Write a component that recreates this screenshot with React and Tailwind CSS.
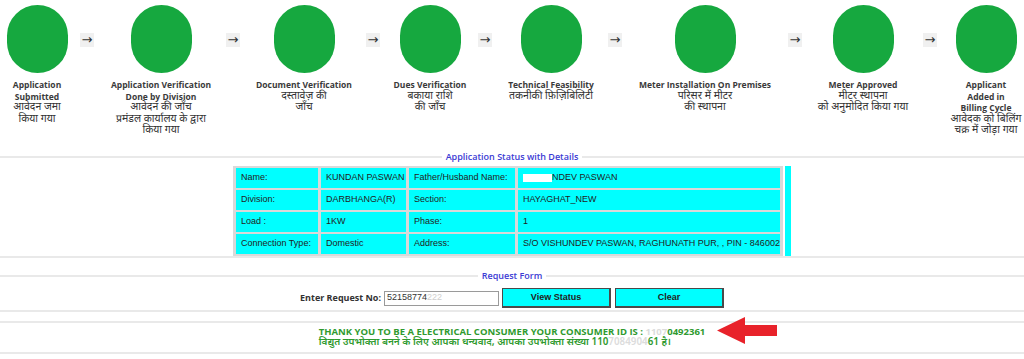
import React from 'react';

const HINDI = "font-['Noto_Sans_Devanagari','Lohit_Devanagari','Noto_Sans',sans-serif]";

const STEPS = [
    { width: 'w-[74px]', title: ['Application', 'Submitted'], hindi: ['आवेदन जमा', 'किया गया'] },
    { width: 'w-[122px]', title: ['Application Verification', 'Done by Division'], hindi: ['आवेदन की जाँच', 'प्रमंडल कार्यालय के द्वारा', 'किया गया'] },
    { width: 'w-[120px]', title: ['Document Verification'], hindi: ['दस्तावेज़ की', 'जाँच'] },
    { width: 'w-[96px]', title: ['Dues Verification'], hindi: ['बकाया राशि', 'की जाँच'] },
    { width: 'w-[118px]', title: ['Technical Feasibility'], hindi: ['तकनीकी फ़िज़िबिलिटी'] },
    { width: 'w-[170px]', title: ['Meter Installation On Premises'], hindi: ['परिसर में मीटर', 'की स्थापना'] },
    { width: 'w-[126px]', title: ['Meter Approved'], hindi: ['मीटर स्थापना', 'को अनुमोदित किया गया'] },
    { width: 'w-[104px]', title: ['Applicant', 'Added in', 'Billing Cycle'], hindi: ['आवेदक को बिलिंग', 'चक्र में जोड़ा गया'] },
];

const ARROWS = ['w-[26px]', 'w-[22px]', 'w-[18px]', 'w-[14px]', 'w-[10px]', 'w-[10px]', 'w-[8px]'];

const COLS = ['w-[82px]', 'w-[85px]', 'w-[106px]', 'w-[262px]'];

const MaskedName = () => (
    <span>
        <span className="inline-block w-[29px] h-[8px] bg-white align-middle" />
        NDEV PASWAN
    </span>
);

const ROWS = [
    ['Name:', 'KUNDAN PASWAN', 'Father/Husband Name:', <MaskedName />],
    ['Division:', 'DARBHANGA(R)', 'Section:', 'HAYAGHAT_NEW'],
    ['Load :', '1KW', 'Phase:', '1'],
    ['Connection Type:', 'Domestic', 'Address:', 'S/O VISHUNDEV PASWAN, RAGHUNATH PUR, , PIN - 846002'],
];

const StepRow = () => (
    <div className="flex h-[151px] overflow-hidden">
        {STEPS.map((step, i) => (
            <React.Fragment key={step.title.join(' ')}>
                {i > 0 && (
                    <div className={`${ARROWS[i - 1]} shrink-0 flex justify-center pt-[33px]`}>
                        <span className="h-[14px] shrink-0 bg-[#f0f0f0] px-[2px] font-['DejaVu_Sans',sans-serif] text-[13px] leading-[14px] text-[#333]">
                            →
                        </span>
                    </div>
                )}
                <div className={`${step.width} shrink-0 flex flex-col items-center pt-[5px]`}>
                    <div className="w-[61px] h-[68px] shrink-0 rounded-full bg-[#16a83f]" />
                    <div className="mt-[6px] flex flex-col items-center whitespace-nowrap text-center">
                        {step.title.map(t => (
                            <span key={t} className="h-[11.5px] font-['Open_Sans',sans-serif] text-[8.5px] font-bold leading-[11.5px] text-[#3a3a3a]">
                                {t}
                            </span>
                        ))}
                        {step.hindi.map(t => (
                            <span key={t} className={`${HINDI} h-[11.5px] text-[10.5px] leading-[11.5px] text-[#333]`}>
                                {t}
                            </span>
                        ))}
                    </div>
                </div>
            </React.Fragment>
        ))}
    </div>
);

const Legend = ({ children }) => (
    <legend className="mx-auto px-[4px] font-['Open_Sans',sans-serif] text-[9px] font-semibold leading-[12px] text-[#3b3bd4]">
        {children}
    </legend>
);

export default function App() {
    return (
        <div className="relative w-full h-[359px] overflow-hidden bg-white">
            <StepRow />

            {/* Application status */}
            <fieldset className="border-y-2 border-[#e9e9e9]">
                <Legend>Application Status with Details</Legend>
                <div className="mt-[3px] flex justify-center">
                    <table className="table-fixed border-separate border-spacing-x-[3px] border-spacing-y-[2px] bg-[#d9d9d9] font-['Liberation_Sans',Arial,sans-serif] text-[9px] text-[#222]">
                        <tbody>
                            {ROWS.map((row, r) => (
                                <tr key={r}>
                                    {row.map((cell, c) => (
                                        <td key={c} className={`${COLS[c]} h-[20px] bg-[#00ffff] pl-[5px] pr-0 align-middle whitespace-nowrap`}>
                                            {cell}
                                        </td>
                                    ))}
                                </tr>
                            ))}
                        </tbody>
                    </table>
                    <div className="ml-[2px] w-[6px] bg-[#00ffff]" />
                </div>
            </fieldset>

            {/* Request form */}
            <fieldset className="mt-[12px] border-y-2 border-[#e9e9e9]">
                <Legend>Request Form</Legend>
                <div className="mt-[6px] mb-[2px] flex items-center justify-center">
                    <span className="font-['Open_Sans',sans-serif] text-[9px] font-bold text-[#333]">Enter Request No:</span>
                    <div className="ml-[3px] flex h-[15px] w-[115px] items-center border border-[#9a9a9a] px-[2px] font-['Liberation_Sans',Arial,sans-serif] text-[9px] text-[#333]">
                        52158774<span className="text-[#cfcfcf]">222</span>
                    </div>
                    <button className="ml-[3px] h-[20px] w-[109px] border border-r-2 border-b-2 border-[#4a4a4a] bg-[#00ffff] font-['Liberation_Sans',Arial,sans-serif] text-[9px] font-bold text-[#222]">
                        View Status
                    </button>
                    <button className="ml-[4px] h-[20px] w-[109px] border border-r-2 border-b-2 border-[#4a4a4a] bg-[#00ffff] font-['Liberation_Sans',Arial,sans-serif] text-[9px] font-bold text-[#222]">
                        Clear
                    </button>
                </div>
            </fieldset>

            {/* Result message */}
            <div className="relative mt-[9px] flex justify-center border-y-2 border-[#e9e9e9] pt-[3px] pb-[4px]">
                <div className="text-left leading-[11px] text-[#2f9a2f]">
                    <div className="font-['Open_Sans',sans-serif] text-[9.5px] font-bold">
                        THANK YOU TO BE A ELECTRICAL CONSUMER YOUR CONSUMER ID IS : <span className="text-[#dcdcdc]">1107</span>0492361
                    </div>
                    <div className={`${HINDI} text-[10px] font-semibold`}>
                        विद्युत उपभोक्ता बनने के लिए आपका धन्यवाद, आपका उपभोक्ता संख्या 110<span className="text-[#dcdcdc]">7084904</span>61 है।
                    </div>
                </div>
                <svg className="absolute left-[717px] top-[-6px]" width="60" height="27" viewBox="0 0 60 27">
                    <polygon points="0,13.5 28,0 28,8 60,8 60,19 28,19 28,27" fill="#e8222a" />
                </svg>
            </div>
        </div>
    );
}
